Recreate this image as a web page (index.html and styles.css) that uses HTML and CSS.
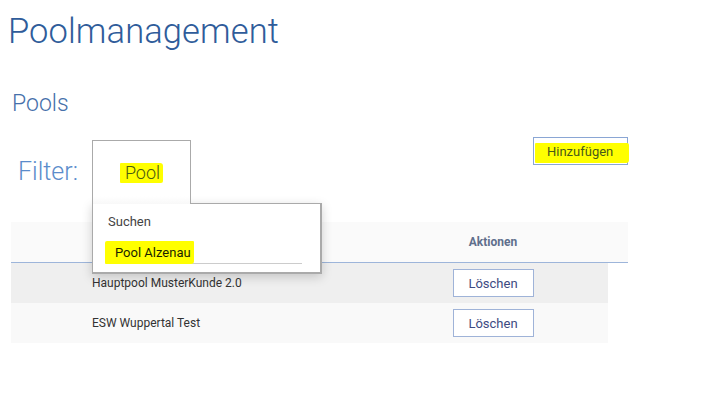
FILE: index.html
```html
<!DOCTYPE html>
<html lang="de">
<head>
<meta charset="utf-8">
<title>Poolmanagement</title>
<link rel="stylesheet" href="styles.css">
</head>
<body>
<div class="page">
  <h1 class="title">Poolmanagement</h1>
  <h2 class="subtitle">Pools</h2>
  <div class="toolbar">
    <div class="filter-label">Filter:</div>
    <div class="tab-wrap">
      <div class="tab"><span class="hl hl-pool">Pool</span></div>
      <div class="dropdown">
        <div class="dd-item">Suchen</div>
        <div class="dd-input"><span class="hl hl-alz">Pool Alzenau</span></div>
      </div>
    </div>
    <button class="btn-add"><span class="hl hl-add">Hinzufügen</span></button>
  </div>
  <div class="table">
    <div class="thead">
      <div class="cell"></div>
      <div class="cell th-actions">Aktionen</div>
    </div>
    <div class="row row-odd">
      <div class="cell name">Hauptpool MusterKunde 2.0</div>
      <div class="cell actions"><button class="btn-del">Löschen</button></div>
    </div>
    <div class="row row-even">
      <div class="cell name">ESW Wuppertal Test</div>
      <div class="cell actions"><button class="btn-del">Löschen</button></div>
    </div>
  </div>
</div>
</body>
</html>
```

FILE: styles.css
```css
html, body {
  margin: 0;
  padding: 0;
  background: #ffffff;
}
body {
  font-family: Roboto, "Liberation Sans", sans-serif;
}
.page {
  width: 617px;
  padding: 0 11px;
}
.title {
  margin: 11px 0 0 -3px;
  font-size: 34.5px;
  line-height: 40px;
  font-weight: 300;
  color: #2f5c9a;
  letter-spacing: 0.1px;
}
.subtitle {
  margin: 38px 0 0 1px;
  font-size: 23px;
  line-height: 30px;
  font-weight: 300;
  color: #4670aa;
}
.toolbar {
  display: flex;
  align-items: flex-start;
  margin-top: 18px;
  height: 85px;
}
.filter-label {
  width: 74px;
  padding-left: 7px;
  margin-top: 20px;
  font-size: 25px;
  line-height: 30px;
  font-weight: 300;
  color: #5b8ccb;
}
.tab-wrap {
  position: relative;
  margin-top: 3px;
}
.tab {
  position: relative;
  z-index: 2;
  box-sizing: border-box;
  width: 99px;
  height: 64px;
  border: 1px solid #aaaaaa;
  border-bottom: none;
  background: linear-gradient(#ffffff 88%, #f8f8f8);
  display: flex;
  justify-content: center;
  padding-top: 22px;
}
.hl {
  background: #ffff00;
}
.hl-pool {
  font-size: 18px;
  line-height: 20px;
  height: 20px;
  padding: 0 3px 0 5px;
  font-weight: 300;
  color: #4a5a12;
  border-radius: 1px 3px 2px 1px;
}
.dropdown {
  position: absolute;
  z-index: 1;
  top: 63px;
  left: 0;
  box-sizing: border-box;
  width: 230px;
  height: 71px;
  background: #ffffff;
  border: 1px solid #aaaaaa;
  border-right-width: 2px;
  border-bottom-width: 2px;
  box-shadow: 0 3px 10px rgba(0, 0, 0, 0.18);
  padding: 10px 0 0 15px;
}
.dd-item {
  font-size: 13px;
  line-height: 16px;
  color: #444444;
}
.dd-input {
  margin: 14px 0 0 4px;
  width: 190px;
  height: 19px;
  border-bottom: 1px solid #cccccc;
  position: relative;
}
.hl-alz {
  position: absolute;
  left: -7px;
  top: -3px;
  height: 23px;
  width: 79px;
  padding-left: 10px;
  font-size: 13px;
  line-height: 23px;
  color: #1a1f00;
  border-radius: 2px 1px 3px 1px;
}
.btn-add {
  margin-left: auto;
  box-sizing: border-box;
  width: 95px;
  height: 28px;
  background: #ffffff;
  border: 1px solid #8aa6d4;
  padding: 0;
  position: relative;
  font-family: Roboto, "Liberation Sans", sans-serif;
}
.hl-add {
  position: absolute;
  left: 1px;
  top: 5px;
  width: 94px;
  height: 20px;
  box-sizing: border-box;
  padding-left: 12px;
  text-align: left;
  font-size: 13px;
  line-height: 18px;
  color: #47591a;
  border-radius: 1px 2px 3px 1px;
}
.table {
  width: 617px;
}
.thead, .row {
  display: grid;
  grid-template-columns: 402px 160px auto;
  align-items: center;
}
.thead {
  height: 40px;
  background: #fafafa;
  border-bottom: 1px solid #9db5da;
}
.th-actions {
  text-align: center;
  font-size: 12px;
  font-weight: 700;
  color: #5f6f8c;
}
.row {
  width: 597px;
  height: 40px;
}
.row-odd {
  background: #efefef;
}
.row-even {
  background: #f9f9f9;
}
.name {
  padding-left: 81px;
  font-size: 12px;
  color: #333333;
}
.actions {
  display: flex;
  justify-content: center;
}
.btn-del {
  box-sizing: border-box;
  width: 81px;
  height: 28px;
  background: #ffffff;
  border: 1px solid #9fb3d8;
  font-family: Roboto, "Liberation Sans", sans-serif;
  font-size: 13px;
  color: #3d4a82;
  padding: 0;
}
```
